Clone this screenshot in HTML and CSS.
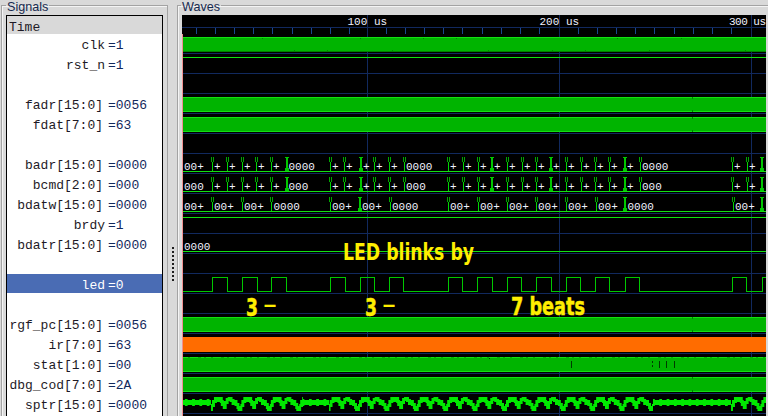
FILE: index.html
```html
<!DOCTYPE html>
<html lang="en">
<head>
<meta charset="utf-8">
<title>Waves</title>
<link rel="stylesheet" href="styles.css">
</head>
<body>
<fieldset class="group signals">
  <legend>Signals</legend>
  <div class="list">
    <div class="time">Time</div>
    <div class="row"><span class="n">clk</span><span class="v">=1</span></div>
    <div class="row"><span class="n">rst_n</span><span class="v">=1</span></div>
    <div class="row"></div>
    <div class="row"><span class="n vec">fadr[15:0]</span><span class="v">=0056</span></div>
    <div class="row"><span class="n vec">fdat[7:0]</span><span class="v">=63</span></div>
    <div class="row"></div>
    <div class="row"><span class="n vec">badr[15:0]</span><span class="v">=0000</span></div>
    <div class="row"><span class="n vec">bcmd[2:0]</span><span class="v">=000</span></div>
    <div class="row"><span class="n vec">bdatw[15:0]</span><span class="v">=0000</span></div>
    <div class="row"><span class="n">brdy</span><span class="v">=1</span></div>
    <div class="row"><span class="n vec">bdatr[15:0]</span><span class="v">=0000</span></div>
    <div class="row"></div>
    <div class="row selected"><span class="n">led</span><span class="v">=0</span></div>
    <div class="row"></div>
    <div class="row"><span class="n vec">rgf_pc[15:0]</span><span class="v">=0056</span></div>
    <div class="row"><span class="n vec">ir[7:0]</span><span class="v">=63</span></div>
    <div class="row"><span class="n vec">stat[1:0]</span><span class="v">=00</span></div>
    <div class="row"><span class="n vec">dbg_cod[7:0]</span><span class="v">=2A</span></div>
    <div class="row"><span class="n vec">sptr[15:0]</span><span class="v">=0000</span></div>
  </div>
</fieldset>
<div class="sash"><div class="grip"></div></div>
<fieldset class="group waves">
  <legend>Waves</legend>
  <svg class="canvas" width="584" height="401" viewBox="182 15 584 401" xmlns="http://www.w3.org/2000/svg">
    <defs>
      <g id="tick">
        <path class="tk-top" d="M-1 0v5M1 0v5"/>
        <path class="tk-mid" d="M0 5v9"/>
      </g>
      <g id="thick">
        <path class="tk-thick" d="M-1 0h4v1h-1v10h1v3h-4v-3h1v-10h-1z"/>
      </g>
      <g id="rowticks">
        <use href="#tick" x="212"/><use href="#tick" x="227"/><use href="#tick" x="242"/><use href="#tick" x="256"/><use href="#tick" x="271"/><use href="#thick" x="286"/>
        <use href="#tick" x="330"/><use href="#tick" x="344"/><use href="#thick" x="360"/><use href="#tick" x="374"/><use href="#tick" x="389"/><use href="#tick" x="404"/>
        <use href="#tick" x="448"/><use href="#tick" x="463"/><use href="#tick" x="478"/><use href="#thick" x="491"/><use href="#tick" x="507"/><use href="#tick" x="522"/><use href="#tick" x="536"/><use href="#thick" x="550"/><use href="#tick" x="566"/><use href="#tick" x="581"/><use href="#tick" x="595"/><use href="#tick" x="609"/><use href="#thick" x="624"/><use href="#tick" x="640"/>
        <use href="#tick" x="732"/><use href="#tick" x="747"/><use href="#thick" x="761"/>
      </g>
      <g id="plus">
        <text class="bus" x="214">+</text><text class="bus" x="229">+</text><text class="bus" x="244">+</text><text class="bus" x="258">+</text><text class="bus" x="273">+</text>
        <text class="bus" x="332">+</text><text class="bus" x="346">+</text><text class="bus" x="363">+</text><text class="bus" x="376">+</text><text class="bus" x="391">+</text>
        <text class="bus" x="450">+</text><text class="bus" x="465">+</text><text class="bus" x="480">+</text><text class="bus" x="494">+</text><text class="bus" x="509">+</text><text class="bus" x="524">+</text><text class="bus" x="538">+</text><text class="bus" x="553">+</text><text class="bus" x="568">+</text><text class="bus" x="583">+</text><text class="bus" x="597">+</text><text class="bus" x="611">+</text><text class="bus" x="627">+</text>
        <text class="bus" x="734">+</text><text class="bus" x="749">+</text>
      </g>
      <pattern id="stack" patternUnits="userSpaceOnUse" x="211" y="396" width="29.4" height="18">
        <path class="sp" d="M0 15V9H2V5H4V2H5V4H7V2H10V5H11V8H13V11H14V6H16V3H18V2H20V4H22V7H24V5H25V8H27V11H28.4V15"/>
      </pattern>
      <pattern id="flat" patternUnits="userSpaceOnUse" x="183" y="396" width="7.3" height="18">
        <path class="sp-flat" d="M0 4h2V3h3v1h2.3v5H5v1H2V9H0z"/>
      </pattern>
    </defs>

    <path class="grid" d="M182 27.5H766M182 53.5H766M182 73.5H766M182 93.5H766M182 113.5H766M182 133.5H766M182 153.5H766M182 173.5H766M182 193.5H766M182 213.5H766M182 233.5H766M182 253.5H766M182 273.5H766M182 293.5H766M182 313.5H766M182 333.5H766M182 353.5H766M182 373.5H766M182 393.5H766M182 413.5H766"/>
    <path class="grid" d="M367.5 15V416M559.5 15V416M751.5 15V416"/>
    <path class="ruler" d="M196.5 28v6M215.5 28v6M234.5 28v6M253.5 28v6M272.5 28v6M292.5 28v6M311.5 28v6M330.5 28v6M349.5 28v6M386.5 28v6M405.5 28v6M424.5 28v6M443.5 28v6M462.5 28v6M482.5 28v6M501.5 28v6M520.5 28v6M539.5 28v6M578.5 28v6M597.5 28v6M616.5 28v6M635.5 28v6M654.5 28v6M674.5 28v6M693.5 28v6M712.5 28v6M731.5 28v6"/>
    <text class="bus" x="347.5" y="25">100 us</text>
    <text class="bus" x="539.5" y="25">200 us</text>
    <text class="bus" x="729" y="25" textLength="37">300 us</text>

    <!-- clk -->
    <rect class="band" x="183" y="37" width="583" height="14"/>
    <path class="hi" d="M183 37.5H766"/>
    <path class="lo" d="M183 51.5H766"/>
    <path class="lo" d="M262.5 38v1M360.5 38v1M423.5 38v1M456.5 38v1M617.5 38v1M681.5 38v1M294.5 50v1M327.5 50v1M392.5 50v1M488.5 50v1M552.5 50v1M585.5 50v1M649.5 50v1M745.5 50v1"/>
    <!-- rst_n -->
    <path class="hi" d="M183 57.5H766"/>
    <!-- fadr, fdat -->
    <rect class="band" x="183" y="97" width="583" height="14"/>
    <path class="hi" d="M183 97.5H766M183 111.5H766"/>
    <rect class="band" x="183" y="117" width="583" height="14"/>
    <path class="hi" d="M183 117.5H766M183 131.5H766"/>
    <path class="lo" d="M692.5 97v2M692.5 110v2M692.5 117v2M692.5 130v2"/>

    <!-- badr -->
    <g transform="translate(0 157)">
      <use href="#rowticks"/>
      <path class="hi" d="M183 14.5H766"/>
    </g>
    <g transform="translate(0 170)">
      <text class="bus" x="184">00+</text>
      <use href="#plus"/>
      <text class="bus" x="288.5">0000</text><text class="bus" x="406">0000</text><text class="bus" x="642">0000</text>
    </g>
    <!-- bcmd -->
    <g transform="translate(0 177)">
      <use href="#rowticks"/>
      <path class="hi" d="M183 14.5H766"/>
    </g>
    <g transform="translate(0 190)">
      <text class="bus" x="184">000</text>
      <use href="#plus"/>
      <text class="bus" x="288.5">000</text><text class="bus" x="406">000</text><text class="bus" x="642">000</text>
    </g>
    <!-- bdatw -->
    <g transform="translate(0 197)">
      <use href="#tick" x="212"/><use href="#tick" x="242"/><use href="#tick" x="271"/><use href="#tick" x="330"/><use href="#thick" x="359"/><use href="#tick" x="390"/><use href="#tick" x="448"/><use href="#tick" x="478"/><use href="#tick" x="507"/><use href="#tick" x="536"/><use href="#tick" x="566"/><use href="#tick" x="596"/><use href="#thick" x="624"/><use href="#tick" x="733"/><use href="#thick" x="761"/>
      <path class="hi" d="M183 14.5H766"/>
    </g>
    <g transform="translate(0 210)">
      <text class="bus" x="184">00+</text><text class="bus" x="214">00+</text><text class="bus" x="244">00+</text><text class="bus" x="273.5">0000</text><text class="bus" x="332">00+</text><text class="bus" x="362">00+</text><text class="bus" x="392">0000</text><text class="bus" x="450">00+</text><text class="bus" x="480">00+</text><text class="bus" x="509">00+</text><text class="bus" x="538">00+</text><text class="bus" x="568">00+</text><text class="bus" x="598">00+</text><text class="bus" x="627.5">0000</text><text class="bus" x="735">00+</text>
    </g>
    <!-- brdy -->
    <path class="hi" d="M183 217.5H766"/>
    <!-- bdatr -->
    <path class="hi" d="M183 251.5H766"/>
    <text class="bus" x="184" y="250">0000</text>
    <!-- led -->
    <path class="led" d="M183 291.5H212.5V277.5H227.5V291.5H242.5V277.5H257.5V291.5H271.5V277.5H286.5V291.5H330.5V277.5H345.5V291.5H360.5V277.5H374.5V291.5H389.5V277.5H403.5V291.5H448.5V277.5H462.5V291.5H477.5V277.5H492.5V291.5H507.5V277.5H521.5V291.5H536.5V277.5H551.5V291.5H566.5V277.5H580.5V291.5H595.5V277.5H609.5V291.5H625.5V277.5H639.5V291.5H732.5V277.5H746.5V291.5H762.5V277.5H766"/>
    <!-- rgf_pc -->
    <rect class="band" x="183" y="317" width="583" height="14"/>
    <path class="hi" d="M183 317.5H766M183 331.5H766"/>
    <path class="lo" d="M692.5 317v2M692.5 330v2"/>
    <!-- ir -->
    <rect class="orange" x="183" y="337" width="583" height="15"/>
    <!-- stat -->
    <rect class="band" x="183" y="357" width="583" height="14"/>
    <path class="dash" d="M183 357.5H766"/>
    <path class="hi" d="M183 371.5H766"/>
    <path class="stat-t" d="M571.5 361v7M652.5 361v2M652.5 365v2M659.5 361v7M666.5 361v7M674.5 361v7M489.5 358v1"/>
    <!-- dbg_cod -->
    <rect class="band" x="183" y="377" width="583" height="14"/>
    <path class="hi" d="M183 377.5H766M183 391.5H766"/>
    <path class="lo" d="M692.5 377v2M692.5 390v2"/>
    <!-- sptr -->
    <rect class="fill-flat" x="183" y="396" width="28" height="18"/>
    <rect class="fill-stack" x="211" y="396" width="92" height="18"/>
    <rect class="fill-flat" x="303" y="396" width="26" height="18"/>
    <rect class="fill-stack" x="329" y="396" width="324" height="18"/>
    <rect class="fill-flat" x="653" y="396" width="78" height="18"/>
    <rect class="fill-stack" transform="translate(520 0)" x="211" y="396" width="35" height="18"/>

    <!-- pink cursor edge -->
    <path class="edge" d="M182.5 34V416"/>

    <!-- annotations -->
    <text class="note" x="343" y="260" textLength="131" lengthAdjust="spacingAndGlyphs">LED blinks by</text>
    <text class="note big" x="246" y="316" textLength="12" lengthAdjust="spacingAndGlyphs">3</text>
    <text class="note-dash" x="263" y="311" textLength="14" lengthAdjust="spacingAndGlyphs">–</text>
    <text class="note big" x="365" y="316" textLength="12" lengthAdjust="spacingAndGlyphs">3</text>
    <text class="note-dash" x="382" y="311" textLength="14" lengthAdjust="spacingAndGlyphs">–</text>
    <text class="note big" x="511" y="315" textLength="74" lengthAdjust="spacingAndGlyphs">7 beats</text>
  </svg>
</fieldset>
</body>
</html>
```
FILE: styles.css
```css
html, body { margin: 0; padding: 0; }
body {
  width: 768px;
  height: 416px;
  overflow: hidden;
  display: flex;
  background: #d9d9d9;
  font-family: "Liberation Mono", monospace;
}
.group {
  margin: 0;
  min-width: 0;
  border: 1px solid #a3a3a3;
  border-bottom: none;
  box-shadow: inset 1px 1px 0 #f4f4f4;
  height: 416px;
  box-sizing: border-box;
  overflow: visible;
}
.group legend {
  font: 12.6px/14px "Liberation Sans", Arial, sans-serif;
  color: #16294f;
  height: 11px;
  padding: 0 1px;
  margin-left: 0;
}
.signals {
  width: 167px;
  margin-left: 1px;
  flex: none;
  padding: 4px 3px 0 4px;
}
.waves {
  flex: 1;
  padding: 4px 0 0 4px;
  border-right: none;
}
.waves legend { margin-left: -1px; }
.list {
  width: 157px;
  box-sizing: border-box;
  border: 1px solid #000;
  border-bottom: none;
  background: #fff;
  height: 401px;
  overflow: hidden;
  font-size: 13px;
  color: #1e1a26;
}
.time {
  height: 18px;
  line-height: 24px;
  padding-left: 2px;
  background: #d9d9d9;
}
.row {
  display: flex;
  height: 20px;
  line-height: 24px;
  white-space: pre;
}
.row .n {
  width: 98px;
  flex: none;
  box-sizing: border-box;
  text-align: right;
}
.row .n.vec { padding-right: 2px; }
.row .v {
  padding-left: 3px;
  color: #12285c;
}
.row.selected {
  background: #4a6cb4;
  color: #fff;
  height: 19px;
  margin-bottom: 1px;
}
.row.selected .v { color: #fff; }
.sash {
  width: 9px;
  flex: none;
  display: flex;
  justify-content: center;
}
.grip {
  margin-top: 247px;
  width: 2px;
  height: 34px;
  background: repeating-linear-gradient(#1d1d1d 0 2px, transparent 2px 4px);
}
.canvas {
  display: block;
  background: #000;
}
.canvas path, .canvas rect { shape-rendering: crispEdges; }
.grid { fill: none; stroke: #11295e; stroke-width: 1; }
.ruler { fill: none; stroke: #184690; stroke-width: 1; }
.band { fill: #00b400; }
.orange { fill: #ff6c00; }
.hi { fill: none; stroke: #12e012; stroke-width: 1; }
.lo { fill: none; stroke: #008200; stroke-width: 1; }
.led { fill: none; stroke: #00c800; stroke-width: 1; }
.dash { fill: none; stroke: #12e012; stroke-dasharray: 5 2 8 3 3 2; }
.stat-t { fill: none; stroke: #003a00; }
.edge { fill: none; stroke: #f09090; }
.tk-top { fill: none; stroke: #00a800; stroke-width: 1; transform: translate(.5px, 0); }
.tk-mid { fill: none; stroke: #00d800; stroke-width: 1; transform: translate(.5px, 0); }
.tk-thick { fill: #00c800; }
.sp { fill: none; stroke: #00e800; stroke-width: 3; }
.sp-flat { fill: #00e800; }
.fill-stack { fill: url(#stack); }
.fill-flat { fill: url(#flat); }
.bus {
  font-family: "Liberation Mono", monospace;
  font-size: 11px;
  fill: #f0f2ff;
}
.note, .note-dash {
  font-family: "DejaVu Sans", sans-serif;
  font-weight: 700;
  fill: #ffee00;
}
.note { font-size: 23px; }
.note.big { font-size: 25px; stroke: #ffee00; stroke-width: .5; }
.note-dash { font-size: 18px; }
```
